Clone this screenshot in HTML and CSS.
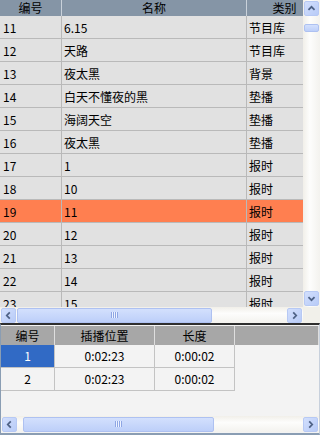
FILE: index.html
```html
<!DOCTYPE html>
<html lang="zh-CN">
<head>
    <meta charset="UTF-8">
    <meta name="viewport" content="width=device-width, initial-scale=1.0">
    <title>节目列表</title>
    <link rel="stylesheet" href="styles.css">
</head>
<body>
    <div class="top">
        <div class="view">
            <div class="row head">
                <div class="c1">编号</div>
                <div class="c2">名称</div>
                <div class="c3">类别</div>
            </div>
            <div class="row"><div class="c1">11</div><div class="c2">6.15</div><div class="c3">节目库</div></div>
            <div class="row"><div class="c1">12</div><div class="c2">天路</div><div class="c3">节目库</div></div>
            <div class="row"><div class="c1">13</div><div class="c2">夜太黑</div><div class="c3">背景</div></div>
            <div class="row"><div class="c1">14</div><div class="c2">白天不懂夜的黑</div><div class="c3">垫播</div></div>
            <div class="row"><div class="c1">15</div><div class="c2">海阔天空</div><div class="c3">垫播</div></div>
            <div class="row"><div class="c1">16</div><div class="c2">夜太黑</div><div class="c3">垫播</div></div>
            <div class="row"><div class="c1">17</div><div class="c2">1</div><div class="c3">报时</div></div>
            <div class="row"><div class="c1">18</div><div class="c2">10</div><div class="c3">报时</div></div>
            <div class="row current"><div class="c1">19</div><div class="c2">11</div><div class="c3">报时</div></div>
            <div class="row"><div class="c1">20</div><div class="c2">12</div><div class="c3">报时</div></div>
            <div class="row"><div class="c1">21</div><div class="c2">13</div><div class="c3">报时</div></div>
            <div class="row"><div class="c1">22</div><div class="c2">14</div><div class="c3">报时</div></div>
            <div class="row"><div class="c1">23</div><div class="c2">15</div><div class="c3">报时</div></div>
        </div>

        <div class="vscroll">
            <div class="btn">
                <svg width="15" height="15" viewBox="0 0 15 15"><polyline points="4,9 7.5,5.5 11,9" fill="none" stroke="#4d6185" stroke-width="2"/></svg>
            </div>
            <div class="vtrack"><div class="vthumb"></div></div>
            <div class="btn">
                <svg width="15" height="15" viewBox="0 0 15 15"><polyline points="4,6 7.5,9.5 11,6" fill="none" stroke="#4d6185" stroke-width="2"/></svg>
            </div>
        </div>

        <div class="hscroll">
            <div class="btn">
                <svg width="15" height="15" viewBox="0 0 15 15"><polyline points="9,4 5.5,7.5 9,11" fill="none" stroke="#4d6185" stroke-width="2"/></svg>
            </div>
            <div class="htrack">
                <div class="hthumb" style="width: 195px;"><span class="grip"></span></div>
            </div>
            <div class="btn">
                <svg width="15" height="15" viewBox="0 0 15 15"><polyline points="6,4 9.5,7.5 6,11" fill="none" stroke="#4d6185" stroke-width="2"/></svg>
            </div>
        </div>
        <div class="corner"></div>
    </div>

    <div class="bottom">
        <div class="list">
            <div class="brow bhead">
                <div class="b1">编号</div>
                <div class="b2">插播位置</div>
                <div class="b3">长度</div>
                <div class="b4"></div>
            </div>
            <div class="brow">
                <div class="b1 selected">1</div>
                <div class="b2">0:02:23</div>
                <div class="b3">0:00:02</div>
            </div>
            <div class="brow">
                <div class="b1">2</div>
                <div class="b2">0:02:23</div>
                <div class="b3">0:00:02</div>
            </div>
        </div>

        <div class="hscroll low">
            <div class="btn">
                <svg width="15" height="15" viewBox="0 0 15 15"><polyline points="9,4 5.5,7.5 9,11" fill="none" stroke="#4d6185" stroke-width="2"/></svg>
            </div>
            <div class="htrack">
                <div class="hthumb" style="width: 191px;"><span class="grip"></span></div>
            </div>
            <div class="btn">
                <svg width="15" height="15" viewBox="0 0 15 15"><polyline points="6,4 9.5,7.5 6,11" fill="none" stroke="#4d6185" stroke-width="2"/></svg>
            </div>
        </div>
    </div>
</body>
</html>
```

FILE: styles.css
```css
* {
    box-sizing: border-box;
}

body {
    margin: 0;
    width: 320px;
    height: 435px;
    overflow: hidden;
    font-family: "Noto Sans CJK SC", "DejaVu Sans", sans-serif;
    font-size: 12px;
    color: #000;
    background: #f2f2f2;
}

/* upper list */
.top {
    display: grid;
    grid-template-columns: 303px 17px;
    grid-template-rows: 307px 16px;
}

.view {
    overflow: hidden;
    background: #e1e1e1;
}

.row {
    display: flex;
    height: 23px;
    line-height: 23px;
    border-bottom: 1px solid #b9b9b9;
    white-space: nowrap;
}

.row > div {
    flex-shrink: 0;
    overflow: hidden;
    border-right: 1px solid #b9b9b9;
    padding-left: 2px;
}

.c1 {
    width: 62px;
    padding-left: 3px !important;
}

.c2 {
    width: 185px;
}

.c3 {
    width: 76px;
}

.row.head {
    height: 16px;
    line-height: 15px;
    background: #8595a6;
    border-bottom: none;
}

.row.head > div {
    text-align: center;
    padding-left: 0 !important;
    border-right: 1px solid #c9d1da;
}

.row.current {
    background: #ff7f50;
}

/* scrollbars */
.btn {
    flex-shrink: 0;
    width: 15px;
    height: 15px;
    border: 1px solid #b7c9f4;
    border-radius: 2px;
    background: linear-gradient(135deg, #d2dffd, #b8cbf7);
    display: flex;
    align-items: center;
    justify-content: center;
}

.btn svg {
    display: block;
}

.vscroll {
    display: flex;
    flex-direction: column;
    align-items: center;
    padding: 1px 0;
    background: linear-gradient(90deg, #f1efe9, #fdfdfc 40%, #f3f2ee);
}

.vtrack {
    flex: 1;
    width: 15px;
    padding-top: 8px;
}

.vthumb {
    height: 8px;
    border: 1px solid #aec1f1;
    border-radius: 2px;
    background: linear-gradient(#d3e0fd, #bdcff9);
}

.hscroll {
    display: flex;
    align-items: center;
    padding: 0 1px;
    background: linear-gradient(#f1efe9, #fdfdfc 40%, #f3f2ee);
}

.htrack {
    flex: 1;
    height: 15px;
    padding-left: 1px;
}

.hthumb {
    height: 15px;
    border: 1px solid #aec1f1;
    border-radius: 2px;
    background: linear-gradient(#d3e0fd, #bdcff9);
    display: flex;
    align-items: center;
    justify-content: center;
}

.grip {
    width: 7px;
    height: 6px;
    background: repeating-linear-gradient(90deg, #8ea6e4 0 1px, #eef3ff 1px 2px);
}

.corner {
    background: #f1f0ea;
}

/* lower list */
.bottom {
    height: 112px;
    border-top: 2px solid #2e2e2e;
    border-left: 1px solid #8a9db3;
    border-right: 1px solid #c7d0dc;
    border-bottom: 2px solid #8a9db3;
    padding-top: 1px;
    display: flex;
    flex-direction: column;
    background: #f3f3f3;
}

.list {
    flex: 1;
}

.brow {
    display: flex;
    height: 23px;
    line-height: 22px;
    text-align: center;
}

.brow > div {
    flex-shrink: 0;
    border-right: 1px solid #c3c3c3;
    border-bottom: 1px solid #c3c3c3;
}

.b1 {
    width: 54px;
}

.b2 {
    width: 100px;
}

.b3 {
    width: 80px;
}

.b4 {
    flex: 1;
}

.brow.bhead {
    height: 19px;
    line-height: 19px;
    background: #a7a7a7;
}

.brow.bhead > div {
    border-bottom: none;
    border-right: 1px solid #dedede;
}

.selected {
    background: #316ac5;
    color: #fff;
}

.hscroll.low {
    height: 16px;
    margin-bottom: 1px;
}

.hscroll.low .htrack {
    padding-left: 6px;
}
```
